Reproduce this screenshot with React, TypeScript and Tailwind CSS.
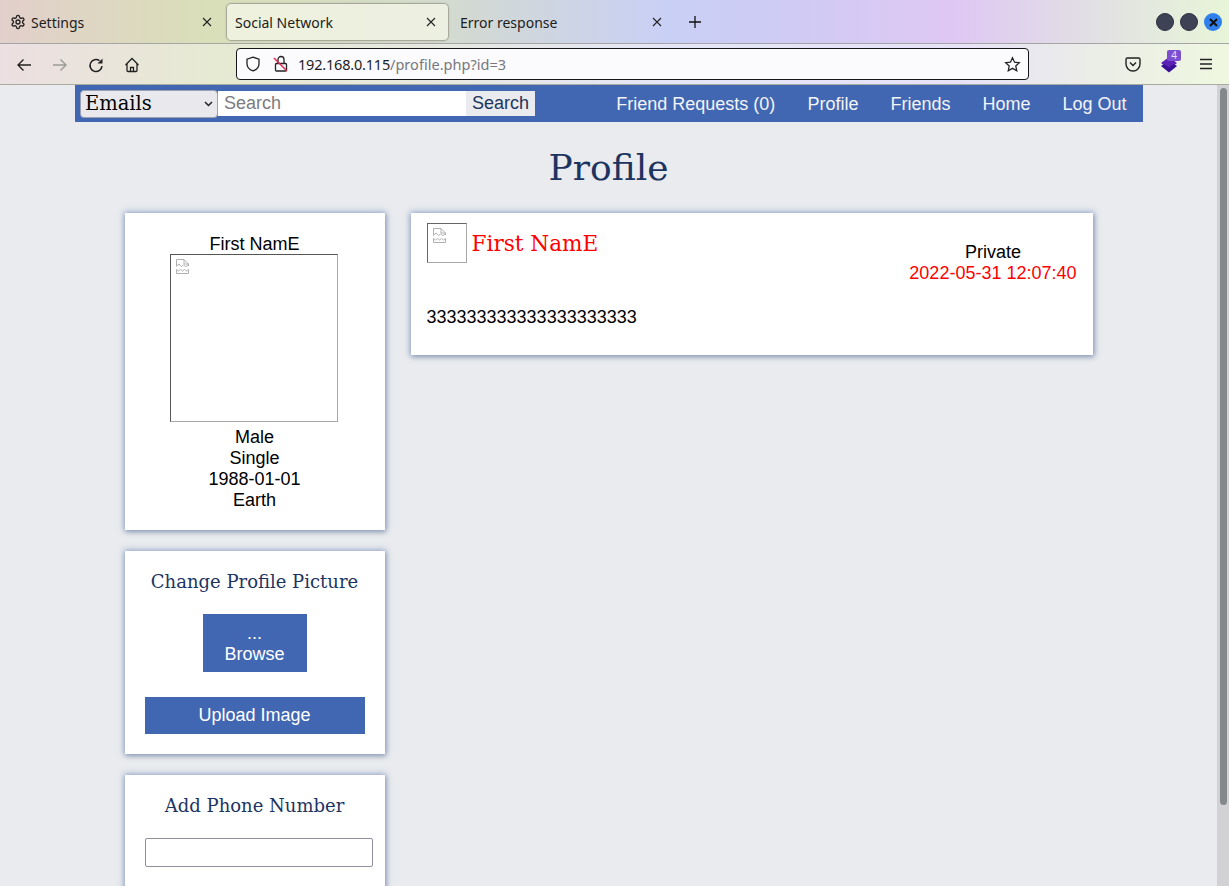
import React from "react";

const X = () => (
  <svg width="10" height="10" viewBox="0 0 10 10" className="shrink-0" fill="none" stroke="#222" strokeWidth="1.1"><path d="M1 1l8 8M9 1l-8 8" /></svg>
);

const Broken = () => (
  <svg width="13" height="15" viewBox="0 0 13 15" fill="none" stroke="#b0b0b0" strokeWidth="1">
    <path d="M.5 7.500V.5h7.500l4.500 4.500v2" />
    <path d="M8 .5V5h4.500" />
    <path d="M.5 7l2.500-2 2.500 2.500 2-1.500 2 1.500 2.500-1" />
    <path d="M.5 14.500V10.500l2 1.500 2-1.500 2 1.500 2-1.500 2 1.500 2-1.500v4z" />
  </svg>
);

const Card = ({ className = "", children }: { className?: string; children: React.ReactNode }) => (
  <div className={`bg-white shadow-[0_0_6px_1px_rgba(66,103,178,0.5),1px_2px_5px_rgba(0,0,0,0.2)] ${className}`}>{children}</div>
);

export default function App() {
  return (
    <div className="h-[886px] w-[1229px] overflow-hidden flex flex-col bg-[#e9ebee] font-['Liberation_Sans',sans-serif]">
      <div className="h-[85px] shrink-0 flex flex-col border-b border-[#a9ab9f] font-['Noto_Sans',sans-serif]">
        <div className="h-[44px] shrink-0 flex items-center border-b border-[#a5a5a5] pt-[1px] pl-[2px] text-[14px] text-[#1c1c1c] bg-[linear-gradient(90deg,#e2cfcb_0%,#d9dfb8_17%,#d5dcc8_33%,#c9d0f5_54%,#cfcbf4_64%,#dfc8f3_78%,#e2e2e2_90%,#e8f5d8_100%)]">
          <div className="w-[222px] h-[37px] flex items-center pl-[8px] pr-[12px]">
            <svg width="16" height="16" viewBox="0 0 24 24" fill="none" stroke="#222" strokeWidth="2" className="mr-[5px]">
              <path d="M12.200 2h-.4a2 2 0 0 0-2 2v.2a2 2 0 0 1-1 1.700l-.4.3a2 2 0 0 1-2 0l-.2-.1a2 2 0 0 0-2.700.7l-.2.4a2 2 0 0 0 .7 2.700l.2.1a2 2 0 0 1 1 1.700v.5a2 2 0 0 1-1 1.800l-.2.1a2 2 0 0 0-.7 2.700l.2.4a2 2 0 0 0 2.700.7l.2-.1a2 2 0 0 1 2 0l.4.3a2 2 0 0 1 1 1.700v.2a2 2 0 0 0 2 2h.4a2 2 0 0 0 2-2v-.2a2 2 0 0 1 1-1.700l.4-.3a2 2 0 0 1 2 0l.2.1a2 2 0 0 0 2.700-.7l.2-.4a2 2 0 0 0-.7-2.700l-.2-.1a2 2 0 0 1-1-1.800v-.5a2 2 0 0 1 1-1.700l.2-.1a2 2 0 0 0 .7-2.700l-.2-.4a2 2 0 0 0-2.700-.7l-.2.1a2 2 0 0 1-2 0l-.4-.3a2 2 0 0 1-1-1.700V4a2 2 0 0 0-2-2z" />
              <circle cx="12" cy="12" r="3" />
            </svg>
            <span className="flex-1">Settings</span>
            <X />
          </div>
          <div className="w-[223px] h-[38px] ml-[2px] flex items-center pl-[8px] pr-[12px] rounded-[5px] border border-[#a8a89c] bg-[#f3f5e6]/80 shadow-[0_0_2px_rgba(0,0,0,0.15)]">
            <span className="flex-1">Social Network</span>
            <X />
          </div>
          <div className="w-[219px] h-[37px] ml-[2px] flex items-center pl-[9px] pr-[8px]">
            <span className="flex-1">Error response</span>
            <X />
          </div>
          <svg width="14" height="14" viewBox="0 0 14 14" stroke="#111" strokeWidth="1.300" className="ml-[18px]"><path d="M7 1v12M1 7h12" /></svg>
          <div className="ml-auto mr-[7px] flex items-center gap-[6px]">
            <div className="w-[18px] h-[18px] rounded-full bg-[#3d4354] border border-[#2c3040]" />
            <div className="w-[18px] h-[18px] rounded-full bg-[#3d4354] border border-[#2c3040]" />
            <div className="w-[18px] h-[18px] rounded-full bg-[#2f80ed] flex items-center justify-center">
              <svg width="9" height="9" viewBox="0 0 9 9" stroke="#111" strokeWidth="2"><path d="M1 1l7 7M8 1l-7 7" /></svg>
            </div>
          </div>
        </div>
        <div className="flex-1 flex items-center bg-[linear-gradient(90deg,#ecdfe2_0%,#e6ead2_18%,#e6e8e0_35%,#e4e6f8_55%,#e8e2f8_78%,#ebeee6_90%,#eff7e0_100%)]">
          <svg width="16" height="16" viewBox="0 0 16 16" fill="none" stroke="#222" strokeWidth="1.400" className="ml-[16px] mt-[2px]"><path d="M15 8H2M7.500 2.500L2 8l5.500 5.500" /></svg>
          <svg width="16" height="16" viewBox="0 0 16 16" fill="none" stroke="#9a9a94" strokeWidth="1.400" className="ml-[20px] mt-[2px]"><path d="M1 8h13M8.500 2.500L14 8l-5.500 5.500" /></svg>
          <svg width="16" height="16" viewBox="0 0 16 16" fill="none" stroke="#222" strokeWidth="1.500" className="ml-[20px] mt-[2px]"><path d="M14 9a6 6 0 1 1-2.500-5.300" /><path d="M14.500 1.500v5h-5z" fill="#222" stroke="none" /></svg>
          <svg width="16" height="16" viewBox="0 0 16 16" fill="none" stroke="#222" strokeWidth="1.300" className="ml-[20px] mt-[2px]"><path d="M1.500 8L8 1.500 14.500 8M3 7v6.500A1 1 0 0 0 4 14.500h8a1 1 0 0 0 1-1V7M6.500 14.500v-4h3v4" /></svg>
          <div className="ml-[96px] w-[793px] h-[32px] rounded-[4px] border border-[#16161a] bg-[#fbfbfe] flex items-center pl-[8px] pr-[7px] text-[14.500px]">
            <svg width="16" height="16" viewBox="0 0 16 16" fill="none" stroke="#222" strokeWidth="1.300"><path d="M8 1.200l6 2v4.500c0 3.500-2.600 6-6 7.200-3.400-1.200-6-3.700-6-7.200V3.200z" /></svg>
            <svg width="16" height="18" viewBox="0 0 16 18" fill="none" className="ml-[12px]"><rect x="2.500" y="8.500" width="11" height="7.500" rx="1" stroke="#222" strokeWidth="1.300" /><path d="M5 8.500V4.500a3 3 0 0 1 6 0v4" stroke="#222" strokeWidth="1.300" /><path d="M1 3l13 13" stroke="#e22850" strokeWidth="1.500" /></svg>
            <span className="ml-[9px] mt-[1px] text-[#1c1c22] tracking-[-0.2px]">192.168.0.115</span>
            <span className="mt-[1px] text-[#77777c] tracking-[0.03px]">/profile.php?id=3</span>
            <svg width="17" height="17" viewBox="0 0 24 24" fill="none" stroke="#222" strokeWidth="1.800" className="ml-auto"><path d="M12 2.500l2.900 6.200 6.700.8-5 4.600 1.400 6.700L12 17.400l-6 3.400 1.400-6.700-5-4.600 6.700-.8z" /></svg>
          </div>
          <svg width="16" height="16" viewBox="0 0 16 16" fill="none" stroke="#222" strokeWidth="1.400" className="ml-[96px]"><path d="M2.500 2h11A1.500 1.500 0 0 1 15 3.500V8a7 7 0 0 1-14 0V3.500A1.500 1.500 0 0 1 2.500 2z" /><path d="M5 6.500l3 3 3-3" /></svg>
          <div className="relative ml-[19px] w-[18px] h-[18px]">
            <svg width="18" height="18" viewBox="0 0 18 18" className="mt-[2px]"><path d="M9 0l8 6-8 6-8-6z" fill="#5b21b6" /><path d="M1 9l3-2 5 3.500L14 7l3 2-8 6.500z" fill="#3b0f96" /></svg>
            <div className="absolute -top-[5px] left-[7px] w-[14px] h-[11px] rounded-[2px] bg-[#7c4fd0] text-[#e8dcff] text-[10px] leading-[11px] text-center">4</div>
          </div>
          <svg width="14" height="12" viewBox="0 0 14 12" stroke="#222" strokeWidth="1.300" className="ml-[21px]"><path d="M1 1.500h12M1 6h12M1 10.500h12" /></svg>
        </div>
      </div>

      <div className="flex-1 min-h-0 flex overflow-hidden">
        <div className="w-[1217px] shrink-0 flex flex-col items-center">
          <div className="w-[1068px] ml-[1px] h-[37px] shrink-0 bg-[#4267b2] flex items-center pl-[5px] pr-[16.500px]">
            <div className="w-[138px] h-[28px] rounded-[4px] border border-[#9aa0b0] bg-[#e9e9ed] flex items-center pl-[4px] pr-[4px] font-['DejaVu_Serif',serif] text-[19.500px] text-black">
              <span className="flex-1 pt-[1px]">Emails</span>
              <svg width="9" height="6" viewBox="0 0 9 6" fill="none" stroke="#222" strokeWidth="1.500"><path d="M1 1l3.500 3.500L8 1" /></svg>
            </div>
            <div className="w-[248px] h-[25px] -mt-[1px] bg-white pl-[6px] flex items-center text-[18px] text-[#7b7b80]">Search</div>
            <div className="w-[69px] h-[25px] -mt-[1px] bg-[#e9ebee] flex items-center justify-center text-[18px] text-[#1d3461]">Search</div>
            <div className="ml-auto pt-[1px] flex items-center gap-[32px] text-[18px] text-[#f3f4f8]">
              <span>Friend Requests (0)</span>
              <span>Profile</span>
              <span>Friends</span>
              <span>Home</span>
              <span>Log Out</span>
            </div>
          </div>

          <h1 className="h-[91px] shrink-0 pt-[23px] text-center font-['DejaVu_Serif',serif] text-[36px] leading-[46px] text-[#1d3461]">Profile</h1>

          <div className="w-[968px] flex items-start gap-[26px]">
            <div className="w-[260px] shrink-0 flex flex-col gap-[21px]">
              <Card className="h-[317px] pt-[21px] flex flex-col items-center text-[18px] leading-[21px] text-black">
                <div>First NamE</div>
                <div className="w-[168px] h-[168px] -mt-[1px] -translate-x-[1px] border border-[#a8a8a8] border-t-[#555] border-l-[#555] pl-[5px] pt-[4px] mb-[5px]"><Broken /></div>
                <div>Male</div>
                <div>Single</div>
                <div>1988-01-01</div>
                <div>Earth</div>
              </Card>
              <Card className="h-[203px] pt-[19px] flex flex-col items-center">
                <div className="font-['DejaVu_Serif',serif] text-[18px] leading-[24px] text-[#1d3461]">Change Profile Picture</div>
                <div className="mt-[20px] w-[104px] h-[58px] pt-[2px] bg-[#4267b2] text-white text-[18px] leading-[21px] flex flex-col items-center justify-center">
                  <span>...</span>
                  <span>Browse</span>
                </div>
                <div className="mt-[25px] w-[220px] h-[37px] bg-[#4267b2] text-white text-[18px] flex items-center justify-center">Upload Image</div>
              </Card>
              <Card className="h-[200px] pt-[19px] px-[20px]">
                <div className="font-['DejaVu_Serif',serif] text-[18px] leading-[24px] text-[#1d3461] text-center">Add Phone Number</div>
                <div className="mt-[20px] w-[228px] h-[29px] rounded-[2px] border border-[#8f8f9d] bg-white" />
              </Card>
            </div>

            <Card className="w-[682px] h-[142px] shrink-0 px-[16px] pt-[10px] text-[18px] text-black">
              <div className="flex items-start">
                <div className="w-[40px] h-[40px] border border-[#a8a8a8] border-t-[#666] border-l-[#666] pl-[5px] pt-[4px]"><Broken /></div>
                <div className="ml-[5px] mt-[7px] font-['DejaVu_Serif',serif] text-[21.600px] leading-[28px] text-[#ff0000]">First NamE</div>
                <div className="ml-auto mt-[19px] text-right leading-[21px]">
                  <div className="text-center">Private</div>
                  <div className="text-[#ff0000]">2022-05-31 12:07:40</div>
                </div>
              </div>
              <div className="mt-[23px] leading-[21px]">333333333333333333333</div>
            </Card>
          </div>
        </div>
        <div className="flex-1 bg-[#d2d2d4] pt-[3px]">
          <div className="mx-auto w-[7px] h-[717px] rounded-full bg-[#84888a]" />
        </div>
      </div>
    </div>
  );
}
